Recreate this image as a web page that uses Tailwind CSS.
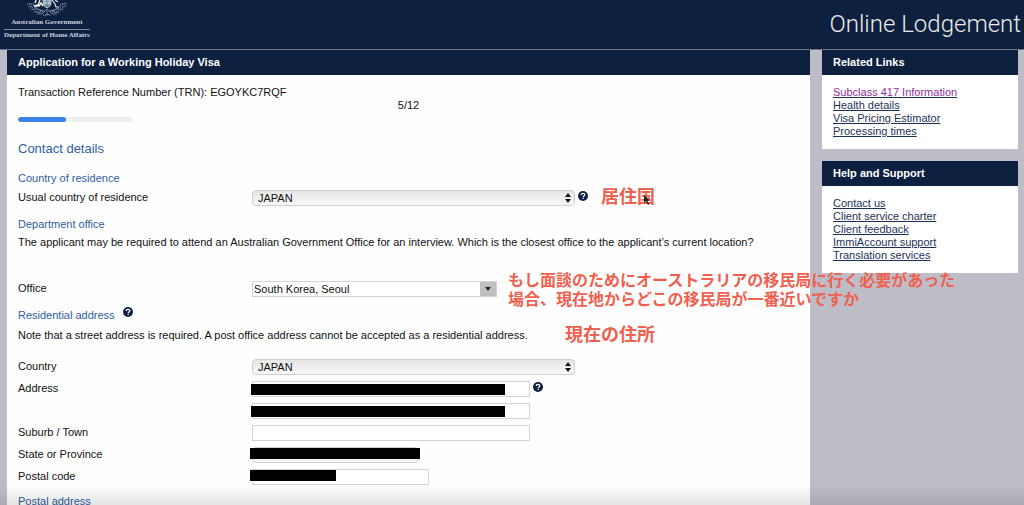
<!DOCTYPE html>
<html lang="en">
<head>
  <meta charset="UTF-8" />
  <meta name="viewport" content="width=device-width, initial-scale=1.0"/>
  <title>Application for a Working Holiday Visa</title>
  <script src="https://cdn.jsdelivr.net/npm/@tailwindcss/browser@4"></script>
</head>
<body class="h-screen overflow-hidden bg-[#bdbdc8] font-['Liberation_Sans','Noto_Sans_CJK_JP',sans-serif] text-[11px] leading-4 text-[#111111]">

  <svg class="hidden">
    <symbol id="help" viewBox="0 0 20 20">
      <circle cx="10" cy="10" r="10" fill="#0e2145"/>
      <path d="M6.600 8.200C6.600 5.900 8 4.800 10.100 4.800c2.100 0 3.500 1.100 3.500 2.900 0 2.300-3.200 2.300-3.200 4.400" fill="none" stroke="#fff" stroke-width="2.500"/>
      <rect x="9.100" y="13.400" width="2.600" height="2.400" fill="#fff"/>
    </symbol>
    <symbol id="updown" viewBox="0 0 6 10">
      <path d="M3 0l3 4H0zM3 10L0 6h6z" fill="#111"/>
    </symbol>
  </svg>

  <header class="flex h-[50px] items-start justify-between border-b border-[#6f7888] bg-[#0d2040] pr-[3px] pl-1">
    <div class="flex flex-col items-center font-['Liberation_Serif',serif] text-[7px] leading-[11px] font-bold whitespace-nowrap text-[#ccd2dc]">
      <svg class="h-4 w-10" viewBox="0 0 40 16" fill="none" stroke="#8f9cb1" stroke-width="0.700">
        <path d="M13 0l-2 5-4 1 5 0 2-3 2 3M9 0l-1 3" stroke="#f3f5f8" stroke-width="1.400"/>
        <path d="M25 0l3 4 1 3 3 0M28 0l3 2" stroke="#dfe4eb" stroke-width="1.200"/>
        <path d="M16 0v3c0 3 2 4 4 5 2-1 4-2 4-5V0zM18 0v5M22 0v5M16 3h8" fill="#71809a" stroke="#e8ecf1"/>
        <path d="M2 3q4 2 7 5t9 3M1 6l4 1M4 10l6-1 6 2M38 3q-4 2-7 5t-9 3M39 6l-4 1M36 10l-6-1-6 2"/>
        <path d="M20 9l-5 5-5 0M20 9l5 5 5 0M20 10v4l-3 2M20 13l3 3M8 11l4 2 3-3M32 11l-4 2-3-3"/>
        <g stroke-dasharray="1 1" stroke-width="1.600" stroke="#66758f">
          <path d="M0 4h7M3 8h8M7 12h10M33 4h7M29 8h8M23 12h10M16 15h8"/>
        </g>
      </svg>
      <span class="pt-px pb-px">Australian Government</span>
      <span class="border-t border-[#7f8ba0]">Department of Home Affairs</span>
    </div>
    <div class="pt-2 font-['Roboto','Liberation_Sans',sans-serif] text-2xl font-light text-[#eceae8]">Online Lodgement</div>
  </header>

  <div class="flex items-start gap-3 pr-1.5 pl-[7px]">
    <main class="relative min-w-0 flex-1 bg-[#fefefe] pb-10">
      <h1 class="bg-[#0d2040] px-[11px] leading-[25px] font-bold text-white">Application for a Working Holiday Visa</h1>

      <form class="px-[11px] pt-[11px]">
        <p class="leading-[13px]">Transaction Reference Number (TRN): EGOYKC7RQF</p>
        <p class="text-center leading-[13px]">5/12</p>
        <div class="mt-[5px] h-[5px] w-[115px] overflow-hidden rounded-full bg-[#efefef]">
          <div class="h-full rounded-full bg-[#3b82ec]" style="width: 41.6%"></div>
        </div>

        <h2 class="mt-[19px] text-[13px] leading-4 text-[#2f5f9f]">Contact details</h2>

        <h3 class="mt-[13px] text-[#2f5f9f]">Country of residence</h3>
        <div class="mt-1 grid grid-cols-[234px_1fr] leading-[14px]">
          <label for="residence">Usual country of residence</label>
          <div class="flex h-4">
            <div class="relative">
              <select id="residence" class="block h-4 w-[323px] appearance-none rounded-sm border border-[#cfcfcf] bg-linear-to-b from-[#e6e6e6] to-[#f8f8f8] px-[5px] leading-[14px]">
                <option>JAPAN</option>
              </select>
              <svg class="pointer-events-none absolute top-[3px] right-1 h-[10px] w-1.5"><use href="#updown"/></svg>
            </div>
            <button type="button" aria-label="Help" class="ml-[3px] h-3"><svg class="size-[10px]"><use href="#help"/></svg></button>
            <span lang="ja" class="relative ml-[13px] text-lg leading-[14px] font-bold text-[#f0604f]">居住国
              <svg class="absolute top-1 right-1 h-3 w-2" viewBox="0 0 8 12"><path d="M1 1v8l2-2 2 4 1.200-.6L4.400 6.600H7z" fill="#222"/></svg>
            </span>
          </div>
        </div>

        <h3 class="mt-[10px] text-[#2f5f9f]">Department office</h3>
        <p class="mt-0.5">The applicant may be required to attend an Australian Government Office for an interview. Which is the closest office to the applicant’s current location?</p>
        <div class="relative mt-[31px] grid grid-cols-[234px_1fr] leading-[14px]">
          <label for="office">Office</label>
          <div class="flex h-4 w-[245px] border border-[#d3d3da] bg-white">
            <input id="office" type="text" value="South Korea, Seoul" class="min-w-0 flex-1 px-px outline-none"/>
            <button type="button" aria-label="Show offices" class="flex w-4 items-center justify-center bg-[#bfbfbf]">
              <svg class="h-1 w-1.5" viewBox="0 0 6 4"><path d="M0 0h6L3 4z" fill="#222"/></svg>
            </button>
          </div>
          <p lang="ja" class="absolute -top-[10px] left-[490px] z-10 text-base leading-[19px] font-bold whitespace-nowrap text-[#f0604f]">もし面談のためにオーストラリアの移民局に行く必要があった<br/>場合、現在地からどこの移民局が一番近いですか</p>
        </div>

        <h3 class="mt-[10px] flex gap-2 text-[#2f5f9f]">Residential address
          <button type="button" aria-label="Help" class="h-[10px]"><svg class="size-[10px]"><use href="#help"/></svg></button>
        </h3>
        <p class="relative mt-1">Note that a street address is required. A post office address cannot be accepted as a residential address.
          <span lang="ja" class="absolute top-0 left-[547px] text-lg leading-4 font-bold text-[#f0604f]">現在の住所</span>
        </p>

        <div class="mt-4 grid grid-cols-[234px_1fr] gap-y-1.5 leading-[14px]">
          <label for="country">Country</label>
          <div class="relative w-[323px]">
            <select id="country" class="block h-4 w-full appearance-none rounded-sm border border-[#cfcfcf] bg-linear-to-b from-[#e6e6e6] to-[#f8f8f8] px-[5px] leading-[14px]">
              <option>JAPAN</option>
            </select>
            <svg class="pointer-events-none absolute top-[3px] right-1 h-[10px] w-1.5"><use href="#updown"/></svg>
          </div>

          <label for="address1">Address</label>
          <div class="flex">
            <div class="relative">
              <input id="address1" type="text" class="block h-4 w-[278px] border border-[#d3d3da] bg-white"/>
              <span class="absolute top-[3px] -left-px h-[11px] w-[254px] bg-black"></span>
            </div>
            <button type="button" aria-label="Help" class="ml-[3px] h-3"><svg class="size-[10px]"><use href="#help"/></svg></button>
          </div>

          <div class="relative col-start-2">
            <input id="address2" type="text" aria-label="Address line 2" class="block h-4 w-[278px] border border-[#d3d3da] bg-white"/>
            <span class="absolute top-[3px] -left-px h-[11px] w-[254px] bg-black"></span>
          </div>

          <label for="suburb">Suburb / Town</label>
          <input id="suburb" type="text" class="block h-4 w-[278px] border border-[#d3d3da] bg-white"/>

          <label for="state">State or Province</label>
          <div class="relative">
            <select id="state" class="block h-4 w-[167px] appearance-none rounded-sm border border-[#cfcfcf] bg-linear-to-b from-[#e6e6e6] to-[#f8f8f8]"></select>
            <span class="absolute top-px -left-0.5 h-[11px] w-[170px] bg-black"></span>
          </div>

          <label for="postcode">Postal code</label>
          <div class="relative">
            <input id="postcode" type="text" class="block h-4 w-[177px] border border-[#d3d3da] bg-white"/>
            <span class="absolute top-px -left-0.5 h-[11px] w-[86px] bg-black"></span>
          </div>
        </div>

        <h3 class="mt-2 text-[#2f5f9f]">Postal address</h3>
      </form>
    </main>

    <aside class="flex w-[196px] flex-col gap-3 leading-[13px]">
      <section class="bg-white">
        <h2 class="bg-[#0d2040] px-[11px] leading-[25px] font-bold text-white">Related Links</h2>
        <ul class="px-[11px] py-[11px] text-[#1c3357] underline">
          <li><a href="#" class="text-[#93309f]">Subclass 417 Information</a></li>
          <li><a href="#">Health details</a></li>
          <li><a href="#">Visa Pricing Estimator</a></li>
          <li><a href="#">Processing times</a></li>
        </ul>
      </section>
      <section class="bg-white">
        <h2 class="bg-[#0d2040] px-[11px] leading-[25px] font-bold text-white">Help and Support</h2>
        <ul class="px-[11px] py-[11px] text-[#1c3357] underline">
          <li><a href="#">Contact us</a></li>
          <li><a href="#">Client service charter</a></li>
          <li><a href="#">Client feedback</a></li>
          <li><a href="#">ImmiAccount support</a></li>
          <li><a href="#">Translation services</a></li>
        </ul>
      </section>
    </aside>
  </div>

  <div class="pointer-events-none fixed inset-x-0 bottom-0 h-5 bg-linear-to-b from-transparent to-black/10"></div>
</body>
</html>
